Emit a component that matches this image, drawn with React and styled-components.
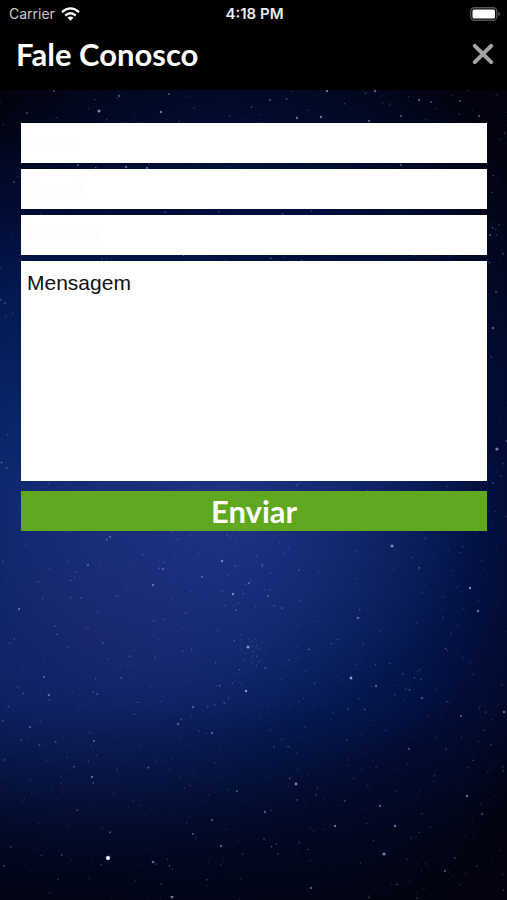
import React from "react";
import styled, { createGlobalStyle } from "styled-components";

const GlobalStyle = createGlobalStyle`
  *, *::before, *::after { box-sizing: border-box; }
  body { margin: 0; background: #000; }
`;

const Screen = styled.div`
  position: relative;
  isolation: isolate;
  min-height: 100vh;
  display: flex;
  flex-direction: column;
  overflow: hidden;
  background:
    linear-gradient(to bottom, transparent 78%, rgba(2, 3, 15, 0.75) 100%),
    radial-gradient(ellipse 50% 24% at 44% 57%, rgba(40, 56, 142, 0.7), transparent),
    radial-gradient(ellipse 44% 24% at 18% 70%, rgba(34, 34, 104, 0.5), transparent),
    radial-gradient(ellipse 105% 46% at 18% 60%, #0a2a70 0%, #082468 35%, #04184f 62%, rgba(2, 12, 56, 0.8) 80%, transparent 100%),
    radial-gradient(ellipse 72% 56% at 46% 55%, #03185a 0%, #02103f 60%, #02030f 100%);
`;

const Sky = styled.svg`
  position: absolute;
  inset: 0;
  z-index: -1;
  width: 100%;
  height: 100%;
`;

const Header = styled.header`
  background: #000;
  color: #fff;
`;

const StatusBar = styled.div`
  display: grid;
  grid-template-columns: 1fr auto 1fr;
  align-items: center;
  height: 28px;
  padding: 0 7px 0 9px;
  font: 500 14px/20px Inter, sans-serif;
`;

const Carrier = styled.span`
  display: flex;
  align-items: center;
  gap: 6px;
  color: #ccc;
  font-weight: 400;
`;

const Clock = styled.time`
  color: #eee;
  font-size: 15px;
  font-weight: 600;
`;

const Battery = styled.svg`
  justify-self: end;
`;

const TitleBar = styled.div`
  display: flex;
  align-items: center;
  justify-content: space-between;
  height: 62px;
  padding: 0 13px 10px 16px;
`;

const Title = styled.h1`
  margin: 0;
  font: 700 31px/36px Lato, sans-serif;
`;

const CloseButton = styled.button`
  display: flex;
  padding: 0;
  border: 0;
  background: none;
  color: #a3a3a3;
  cursor: pointer;
`;

const Form = styled.form`
  display: flex;
  flex-direction: column;
  gap: 6px;
  padding: 33px 20px 33px 21px;
`;

const Field = styled.input`
  width: 100%;
  height: 40px;
  padding: 0 6px;
  border: 0;
  border-radius: 0;
  background: #fff;
  color: #111;
  font: 400 20px/24px "Liberation Sans", sans-serif;
  &::placeholder { color: #fdfdfd; opacity: 1; }
`;

const Message = styled.textarea`
  display: block;
  width: 100%;
  height: 220px;
  padding: 10px 6px;
  border: 0;
  border-radius: 0;
  resize: none;
  background: #fff;
  color: #111;
  font: 400 21px/24px "Liberation Sans", sans-serif;
`;

const SubmitButton = styled.button`
  height: 40px;
  margin-top: 4px;
  padding: 0;
  border: 0;
  background: #5fa81f;
  color: #fff;
  font: 700 31px/36px Lato, sans-serif;
  cursor: pointer;
`;

const brightStars = [
  [108, 858, 2.2, 1], [153, 862, 1.3, 0.6], [172, 897, 1.3, 0.7], [351, 678, 1.4, 0.85],
  [246, 691, 1.2, 0.85], [248, 647, 1.5, 0.8], [233, 594, 1.2, 0.7], [222, 561, 1.2, 0.65],
  [392, 546, 1.5, 0.75], [470, 588, 1.2, 0.75], [478, 611, 1.3, 0.6], [358, 618, 1.3, 0.5],
  [296, 784, 1.4, 0.7], [384, 854, 1.5, 0.75], [395, 826, 1.2, 0.6], [335, 826, 1.2, 0.6],
  [380, 806, 1.2, 0.5], [467, 796, 1.2, 0.6], [311, 888, 1.2, 0.5], [221, 846, 1.2, 0.5],
  [193, 834, 1, 0.5], [212, 820, 1.2, 0.4], [265, 812, 1.2, 0.45], [92, 777, 1.2, 0.5],
  [94, 741, 1.1, 0.5], [30, 727, 1.1, 0.5], [49, 695, 1.2, 0.5], [44, 677, 1.1, 0.5],
  [178, 724, 1.2, 0.45], [212, 733, 1.2, 0.45], [193, 707, 1.2, 0.4], [110, 537, 1, 0.55],
  [88, 565, 1.1, 0.45], [163, 569, 1.1, 0.45], [153, 585, 1.3, 0.5], [19, 609, 1.2, 0.5],
  [249, 583, 1.1, 0.45], [202, 577, 1.1, 0.45], [99, 111, 1.5, 0.75], [161, 112, 1.2, 0.65],
  [119, 96, 1.1, 0.5], [169, 94, 1.1, 0.4], [327, 91, 1.2, 0.6], [375, 91, 1.3, 0.5],
  [419, 100, 1.2, 0.5], [460, 101, 1.1, 0.45], [431, 102, 1, 0.4], [297, 118, 1.2, 0.6],
  [321, 117, 1.2, 0.65], [369, 121, 1.1, 0.6], [401, 116, 1.1, 0.45], [479, 116, 1.1, 0.5],
  [270, 100, 1.1, 0.45], [27, 113, 1, 0.4], [54, 91, 1, 0.4], [14, 182, 1, 0.4],
  [78, 165, 1, 0.5], [126, 167, 1.2, 0.55], [147, 168, 1.2, 0.5], [401, 165, 1.1, 0.45],
  [497, 449, 1.6, 0.7], [493, 328, 1.2, 0.5], [490, 235, 1.1, 0.45], [496, 292, 1, 0.4],
  [5, 303, 1, 0.35], [504, 712, 1.2, 0.6], [461, 716, 1.1, 0.5], [376, 686, 1.2, 0.5],
  [422, 698, 1.2, 0.4], [409, 749, 1.1, 0.45], [482, 814, 1, 0.45], [445, 871, 1.2, 0.4],
];

const createRandom = (seed) => () => {
  seed = (seed * 1664525 + 1013904223) % 4294967296;
  return seed / 4294967296;
};

const random = createRandom(418);
const dust = Array.from({ length: 2200 }, () => [
  random() * 507,
  90 + random() * 810,
  0.4 + random() * 0.5,
  0.1 + random() ** 3 * 0.42,
]);

const cluster = Array.from({ length: 34 }, () => [
  250 + (random() + random() - 1) * 20,
  658 + (random() + random() - 1) * 26,
  0.6,
  0.15 + random() * 0.3,
]);

const stars = [...dust, ...cluster, ...brightStars];

function StarrySky() {
  return (
    <Sky viewBox="0 0 507 900" preserveAspectRatio="xMidYMid slice" aria-hidden="true">
      <g fill="#9fb4ee">
        {stars.map(([x, y, r, opacity], i) => (
          <circle key={i} cx={x} cy={y} r={r} opacity={opacity} />
        ))}
      </g>
      <circle cx="108" cy="858" r="1.6" fill="#fff" />
    </Sky>
  );
}

function WifiIcon() {
  return (
    <svg width="19" height="14" viewBox="0 0 19 14" fill="none" stroke="#fff" strokeWidth="2.3" aria-hidden="true">
      <path d="M1 5.1Q9.5-2.3 18 5.1" />
      <path d="M4.2 8.5Q9.5 4.1 14.8 8.5" />
      <path d="M6.5 10.6Q9.5 8.3 12.5 10.6L9.5 13.7Z" fill="#fff" stroke="none" />
    </svg>
  );
}

function BatteryIcon() {
  return (
    <Battery width="30" height="14" viewBox="0 0 30 14" role="img" aria-label="Bateria">
      <rect x="0.75" y="0.75" width="26" height="12.5" rx="3.5" fill="none" stroke="#555" strokeWidth="1.3" />
      <rect x="2.5" y="2.5" width="22.5" height="9" rx="1.5" fill="#fff" />
      <path d="M28.2 4.7Q30 5.5 30 7T28.2 9.3Z" fill="#555" />
    </Battery>
  );
}

export default function App() {
  return (
    <>
      <GlobalStyle />
      <Screen>
        <StarrySky />
        <Header>
          <StatusBar>
            <Carrier>Carrier <WifiIcon /></Carrier>
            <Clock dateTime="16:18">4:18 PM</Clock>
            <BatteryIcon />
          </StatusBar>
          <TitleBar>
            <Title>Fale Conosco</Title>
            <CloseButton type="button" aria-label="Fechar">
              <svg width="22" height="22" viewBox="0 0 22 22" stroke="currentColor" strokeWidth="4" strokeLinecap="round">
                <path d="M2.8 2.8 19.2 19.2M19.2 2.8 2.8 19.2" />
              </svg>
            </CloseButton>
          </TitleBar>
        </Header>
        <Form onSubmit={(event) => event.preventDefault()}>
          <Field type="text" name="name" placeholder="Nome" aria-label="Nome" />
          <Field type="email" name="email" placeholder="E-mail" aria-label="E-mail" />
          <Field type="text" name="subject" placeholder="Assunto" aria-label="Assunto" />
          <Message name="message" defaultValue="Mensagem" aria-label="Mensagem" />
          <SubmitButton type="submit">Enviar</SubmitButton>
        </Form>
      </Screen>
    </>
  );
}
